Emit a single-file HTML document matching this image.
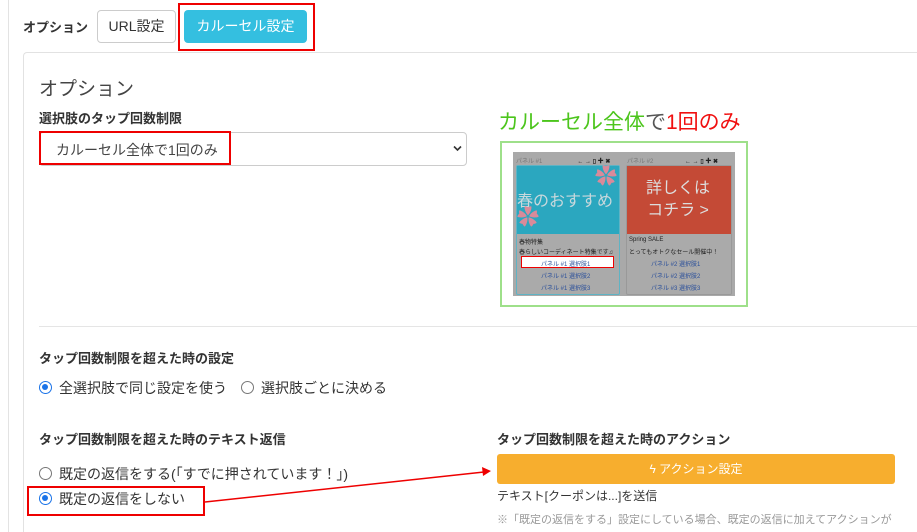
<!DOCTYPE html>
<html style="width:917px;height:532px;overflow:hidden"><head><meta charset="utf-8"><style>
*{margin:0;padding:0;box-sizing:border-box}
body{width:917px;height:532px;overflow:hidden;background:#fff;font-family:"Liberation Sans","Noto Sans CJK JP",sans-serif;color:#333;position:relative;font-size:13px}
.a{position:absolute;white-space:nowrap}
.b{font-weight:bold}
.radio{position:absolute;width:13px;height:13px;border-radius:50%;border:1px solid #777;background:#fff}
.radio.on{border:1.5px solid #1a73e8}
.radio.on::after{content:"";position:absolute;left:2px;top:2px;width:6px;height:6px;border-radius:50%;background:#1a73e8}
.red{position:absolute;border:2px solid #e00}
.tiny{position:absolute;font-size:6px;white-space:nowrap}
</style></head><body>
<div class="a" style="left:8px;top:0;width:1px;height:532px;background:#e3e3e3"></div>
<div class="a b" style="left:23px;top:17px;font-size:13px">オプション</div>
<div class="a" style="left:97px;top:10px;width:79px;height:33px;border:1px solid #ccc;border-radius:4px;text-align:center;line-height:31px;font-size:14px">URL設定</div>
<div class="red" style="left:178px;top:3px;width:137px;height:48px"></div>
<div class="a" style="left:184px;top:10px;width:123px;height:33px;background:#34bfe0;border-radius:4px;color:#fff;text-align:center;line-height:33px;font-size:14px">カルーセル設定</div>
<div class="a" style="left:23px;top:52px;width:894px;height:480px;border:1px solid #e2e2e2;border-right:none;border-bottom:none;border-radius:4px 0 0 0"></div>
<div class="a" style="left:39px;top:74px;font-size:19px;color:#444">オプション</div>
<div class="a b" style="left:39px;top:108px">選択肢のタップ回数制限</div>
<div class="a" style="left:39px;top:132px;width:428px;height:34px;border:1px solid #ccc;border-radius:4px"></div>
<div class="a" style="left:56px;top:140px;font-size:14px;color:#444">カルーセル全体で1回のみ</div>
<svg class="a" style="left:453px;top:145px" width="9" height="7"><path d="M1 1.5L4.5 5L8 1.5" stroke="#333" stroke-width="1.6" fill="none"/></svg>
<div class="red" style="left:39px;top:131px;width:192px;height:34px"></div>
<div class="a" style="left:498px;top:106px;font-size:21px;color:#4cc51c">カルーセル全体<span style="color:#555">で</span><span style="color:#f01010">1回のみ</span></div>
<div class="a" style="left:500px;top:141px;width:248px;height:166px;border:2px solid #9ee08a"></div>
<div class="a" style="left:513px;top:152px;width:222px;height:144px;background:#a9a9a9"></div>
<div class="tiny" style="left:516px;top:156px;color:#777">パネル #1 &nbsp;&nbsp;&nbsp;&nbsp;&nbsp;&nbsp;&nbsp;&nbsp;&nbsp;&nbsp;&nbsp;&nbsp;&nbsp;&nbsp;&nbsp;&nbsp;&nbsp;&nbsp;&nbsp;&nbsp;<b style="color:#222">← → ▯ ✚ ✖</b></div>
<div class="tiny" style="left:627px;top:156px;color:#777">パネル #2 &nbsp;&nbsp;&nbsp;&nbsp;&nbsp;&nbsp;&nbsp;&nbsp;&nbsp;&nbsp;&nbsp;&nbsp;&nbsp;&nbsp;&nbsp;&nbsp;&nbsp;&nbsp;<b style="color:#222">← → ▯ ✚ ✖</b></div>
<div class="a" style="left:516px;top:165px;width:104px;height:130px;background:#aaa;border:1px solid #5fb3c4;border-radius:2px"></div>
<div class="a" style="left:517px;top:166px;width:102px;height:68px;background:#2ba7bf"></div>
<div class="a" style="left:517px;top:187px;font-size:16px;color:#c8d8dc">春のおすすめ</div>
<div class="a" style="left:595px;top:166px;font-size:22px;color:#d98a9a;line-height:1">✿</div>
<div class="a" style="left:517px;top:207px;font-size:22px;color:#d98a9a;line-height:1">✿</div>
<div class="a" style="left:626px;top:165px;width:106px;height:130px;background:#aaa;border-radius:2px;border:1px solid #999"></div>
<div class="a" style="left:627px;top:166px;width:104px;height:68px;background:#c44a36"></div>
<div class="a" style="left:646px;top:178px;font-size:16px;color:#ddd;line-height:22px;text-align:center">詳しくは<br>コチラ &gt;</div>
<div class="tiny" style="left:519px;top:237px;color:#222">春物特集</div>
<div class="tiny" style="left:519px;top:247px;color:#222">春らしいコーディネート特集です♫</div>
<div class="a" style="left:521px;top:256px;width:93px;height:12px;background:#fff;border:1px solid #e00"></div>
<div class="tiny" style="left:541px;top:259px;color:#2a4f9a">パネル #1 選択肢1</div>
<div class="tiny" style="left:541px;top:271px;color:#2a4f9a">パネル #1 選択肢2</div>
<div class="tiny" style="left:541px;top:283px;color:#2a4f9a">パネル #1 選択肢3</div>
<div class="tiny" style="left:629px;top:237px;color:#222">Spring SALE</div>
<div class="tiny" style="left:629px;top:247px;color:#222">とってもオトクなセール開催中！</div>
<div class="tiny" style="left:651px;top:259px;color:#2a4f9a">パネル #2 選択肢1</div>
<div class="tiny" style="left:651px;top:271px;color:#2a4f9a">パネル #2 選択肢2</div>
<div class="tiny" style="left:651px;top:283px;color:#2a4f9a">パネル #3 選択肢3</div>
<div class="a" style="left:39px;top:326px;width:878px;height:1px;background:#e5e5e5"></div>
<div class="a b" style="left:39px;top:348px">タップ回数制限を超えた時の設定</div>
<div class="radio on" style="left:39px;top:381px"></div>
<div class="a" style="left:59px;top:378px;font-size:14px">全選択肢で同じ設定を使う</div>
<div class="radio" style="left:241px;top:381px"></div>
<div class="a" style="left:261px;top:378px;font-size:14px">選択肢ごとに決める</div>
<div class="a b" style="left:39px;top:429px">タップ回数制限を超えた時のテキスト返信</div>
<div class="radio" style="left:39px;top:467px"></div>
<div class="a" style="left:59px;top:464px;font-size:14px">既定の返信をする(｢すでに押されています！｣)</div>
<div class="radio on" style="left:39px;top:492px"></div>
<div class="a" style="left:59px;top:489px;font-size:14px">既定の返信をしない</div>
<div class="red" style="left:27px;top:486px;width:178px;height:30px"></div>
<div class="a b" style="left:497px;top:429px">タップ回数制限を超えた時のアクション</div>
<div class="a" style="left:497px;top:454px;width:398px;height:30px;background:#f7ae2e;border-radius:3px;color:#fff;text-align:center;line-height:30px;font-size:12px">ϟ アクション設定</div>
<div class="a" style="left:497px;top:487px;font-size:12px">テキスト[クーポンは...]を送信</div>
<div class="a" style="left:497px;top:511px;font-size:11px;color:#999;width:420px;overflow:hidden">※「既定の返信をする」設定にしている場合、既定の返信に加えてアクションが</div>
<svg class="a" style="left:0;top:0" width="917" height="532"><line x1="205" y1="502" x2="484" y2="472" stroke="#e00" stroke-width="1.5"/><path d="M491 471L482 467L483 476Z" fill="#e00"/></svg>
</body></html>
